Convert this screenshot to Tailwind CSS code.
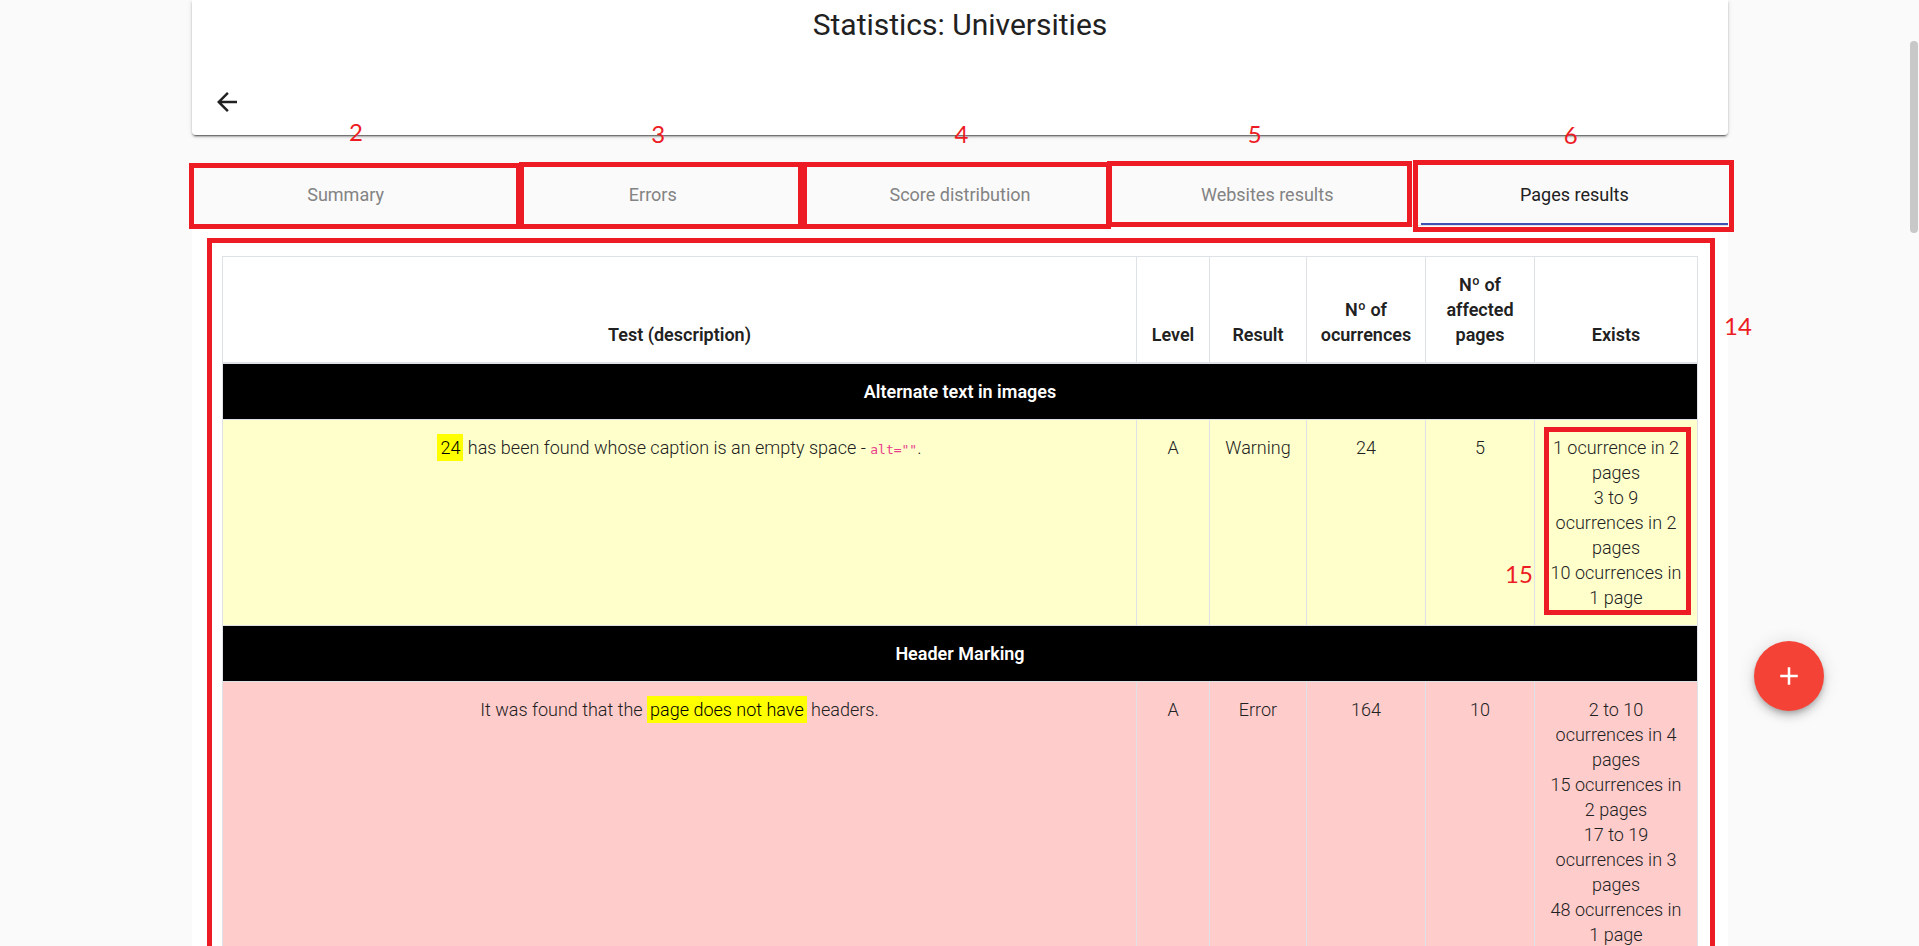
<!DOCTYPE html>
<html lang="en">
<head>
<meta charset="utf-8">
<meta name="viewport" content="width=device-width, initial-scale=1">
<title>Statistics: Universities</title>
<script src="https://cdn.jsdelivr.net/npm/@tailwindcss/browser@4"></script>
</head>
<body class="relative h-screen overflow-hidden bg-[#fafafa] font-['Roboto',sans-serif] text-[18px] leading-[25px] text-[#212121]">
<main class="pr-[191px] pl-48">
  <header class="flex flex-col rounded-b bg-white px-5 pt-1 pb-[18px] shadow-[0_3px_1px_-2px_rgba(0,0,0,0.4),0_2px_2px_0_rgba(0,0,0,0.24),0_1px_5px_0_rgba(0,0,0,0.12)]">
    <h1 class="text-center text-[30px] leading-[42px]">Statistics: Universities</h1>
    <button type="button" aria-label="Back" class="mt-[41px] size-[30px]">
      <svg viewBox="0 0 24 24" class="size-full" fill="currentColor"><path d="M20 11H7.83l5.59-5.59L12 4l-8 8 8 8 1.41-1.41L7.83 13H20v-2z"/></svg>
    </button>
  </header>

  <nav role="tablist" class="relative z-10 mt-[30px] grid grid-cols-5 border-b border-[#e0e0e0]">
    <div class="relative">
      <button role="tab" type="button" class="h-[60px] w-full pb-[2px] text-[#838383]">Summary</button>
      <div class="pointer-events-none absolute -top-[2px] -right-[22px] -bottom-1 -left-[3px] border-5 border-[#ed1c24]"></div>
      <span class="absolute -top-[45px] left-[152px] w-6 text-center font-['Lato',sans-serif] text-[24px] leading-6 text-[#ed1c24]">2</span>
    </div>
    <div class="relative">
      <button role="tab" type="button" class="h-[60px] w-full pb-[2px] text-[#838383]">Errors</button>
      <div class="pointer-events-none absolute -top-[3px] right-[3px] -bottom-1 left-5 border-5 border-[#ed1c24]"></div>
      <span class="absolute -top-[43px] left-[147px] w-6 text-center font-['Lato',sans-serif] text-[24px] leading-6 text-[#ed1c24]">3</span>
    </div>
    <div class="relative">
      <button role="tab" type="button" class="h-[60px] w-full pb-[2px] text-[#838383]">Score distribution</button>
      <div class="pointer-events-none absolute -top-[3px] right-[3px] -bottom-1 -left-1 border-5 border-[#ed1c24]"></div>
      <span class="absolute -top-[43px] left-[143px] w-6 text-center font-['Lato',sans-serif] text-[24px] leading-6 text-[#ed1c24]">4</span>
    </div>
    <div class="relative">
      <button role="tab" type="button" class="h-[60px] w-full pb-[2px] text-[#838383]">Websites results</button>
      <div class="pointer-events-none absolute -top-1 right-[9px] -bottom-[2px] -left-[7px] border-5 border-[#ed1c24]"></div>
      <span class="absolute -top-[43px] left-[129px] w-6 text-center font-['Lato',sans-serif] text-[24px] leading-6 text-[#ed1c24]">5</span>
    </div>
    <div class="relative">
      <button role="tab" type="button" aria-selected="true" class="h-[60px] w-full border-b-2 border-[#3f51b5]">Pages results</button>
      <div class="pointer-events-none absolute -top-[5px] -right-[6px] -bottom-[7px] -left-2 border-5 border-[#ed1c24]"></div>
      <span class="absolute -top-[42px] left-[138px] w-6 text-center font-['Lato',sans-serif] text-[24px] leading-6 text-[#ed1c24]">6</span>
    </div>
  </nav>

  <section role="tabpanel" aria-label="Pages results" class="relative bg-white p-[30px]">
    <table class="w-full table-fixed border-collapse border border-[#dee2e6] text-center font-light">
      <colgroup><col><col class="w-[73px]"><col class="w-[97px]"><col class="w-[119px]"><col class="w-[109px]"><col class="w-[163px]"></colgroup>
      <thead>
        <tr class="border-b-2 border-[#dee2e6] align-bottom">
          <th class="border-x border-[#dee2e6] p-[15px] font-semibold">Test (description)</th>
          <th class="border-x border-[#dee2e6] py-[15px] font-semibold">Level</th>
          <th class="border-x border-[#dee2e6] py-[15px] font-semibold">Result</th>
          <th class="border-x border-[#dee2e6] px-3 py-[15px] font-semibold">Nº of ocurrences</th>
          <th class="border-x border-[#dee2e6] p-[15px] font-semibold">Nº of affected pages</th>
          <th class="border-x border-[#dee2e6] p-[15px] font-semibold">Exists</th>
        </tr>
      </thead>
      <tbody class="align-top">
        <tr class="border-b border-[#dee2e6] bg-black text-white"><th colspan="6" class="p-[15px] font-semibold">Alternate text in images</th></tr>
        <tr class="border-b border-[#dee2e6] bg-[#ffffcc]">
          <td class="border-x border-[#dee2e6] p-[15px]"><mark class="bg-[#ffff00] px-[3px] py-[3px] text-black">24</mark> has been found whose caption is an empty space - <code class="font-['DejaVu_Sans_Mono',monospace] text-[13px] font-normal text-[#e83e8c]">alt=""</code>.</td>
          <td class="border-x border-[#dee2e6] py-[15px]">A</td>
          <td class="border-x border-[#dee2e6] py-[15px]">Warning</td>
          <td class="border-x border-[#dee2e6] py-[15px]">24</td>
          <td class="relative border-x border-[#dee2e6] py-[15px]">5
            <span class="absolute -right-px bottom-[39px] w-8 text-center font-['Lato',sans-serif] text-[24px] leading-6 font-normal text-[#ed1c24]">15</span>
          </td>
          <td class="relative border-x border-[#dee2e6] px-[15px] py-[15px]">
            <ul>
              <li>1 ocurrence in 2 pages</li>
              <li>3 to 9 ocurrences in 2 pages</li>
              <li>10 ocurrences in 1 page</li>
            </ul>
            <div class="pointer-events-none absolute top-[7px] right-[6px] bottom-[10px] left-[9px] border-5 border-[#ed1c24]"></div>
          </td>
        </tr>
        <tr class="border-b border-[#dee2e6] bg-black text-white"><th colspan="6" class="p-[15px] font-semibold">Header Marking</th></tr>
        <tr class="bg-[#ffcccc]">
          <td class="border-x border-[#dee2e6] p-[15px]">It was found that the <mark class="bg-[#ffff00] px-[3px] py-[3px] text-black">page does not have</mark> headers.</td>
          <td class="border-x border-[#dee2e6] py-[15px]">A</td>
          <td class="border-x border-[#dee2e6] py-[15px]">Error</td>
          <td class="border-x border-[#dee2e6] py-[15px]">164</td>
          <td class="border-x border-[#dee2e6] py-[15px]">10</td>
          <td class="border-x border-[#dee2e6] px-[15px] py-[15px]">
            <ul>
              <li>2 to 10 ocurrences in 4 pages</li>
              <li>15 ocurrences in 2 pages</li>
              <li>17 to 19 ocurrences in 3 pages</li>
              <li>48 ocurrences in 1 page</li>
            </ul>
          </td>
        </tr>
      </tbody>
    </table>
    <div class="pointer-events-none absolute top-3 right-[13px] bottom-3 left-[15px] border-5 border-[#ed1c24]"></div>
    <span class="absolute top-[88px] -right-[26px] w-8 text-center font-['Lato',sans-serif] text-[24px] leading-6 text-[#ed1c24]">14</span>
  </section>
</main>

<button type="button" aria-label="Add" class="fixed right-[95px] bottom-[235px] flex size-[70px] items-center justify-center rounded-full bg-[#f44336] text-white shadow-[0_3px_5px_-1px_rgba(0,0,0,0.2),0_6px_10px_0_rgba(0,0,0,0.14),0_1px_18px_0_rgba(0,0,0,0.12)]">
  <svg viewBox="0 0 24 24" class="size-[30px]" fill="currentColor"><path d="M19 13h-6v6h-2v-6H5v-2h6V5h2v6h6v2z"/></svg>
</button>
<div class="fixed top-[41px] right-px h-[192px] w-2 rounded-full bg-[#c8c8c8]"></div>
</body>
</html>
